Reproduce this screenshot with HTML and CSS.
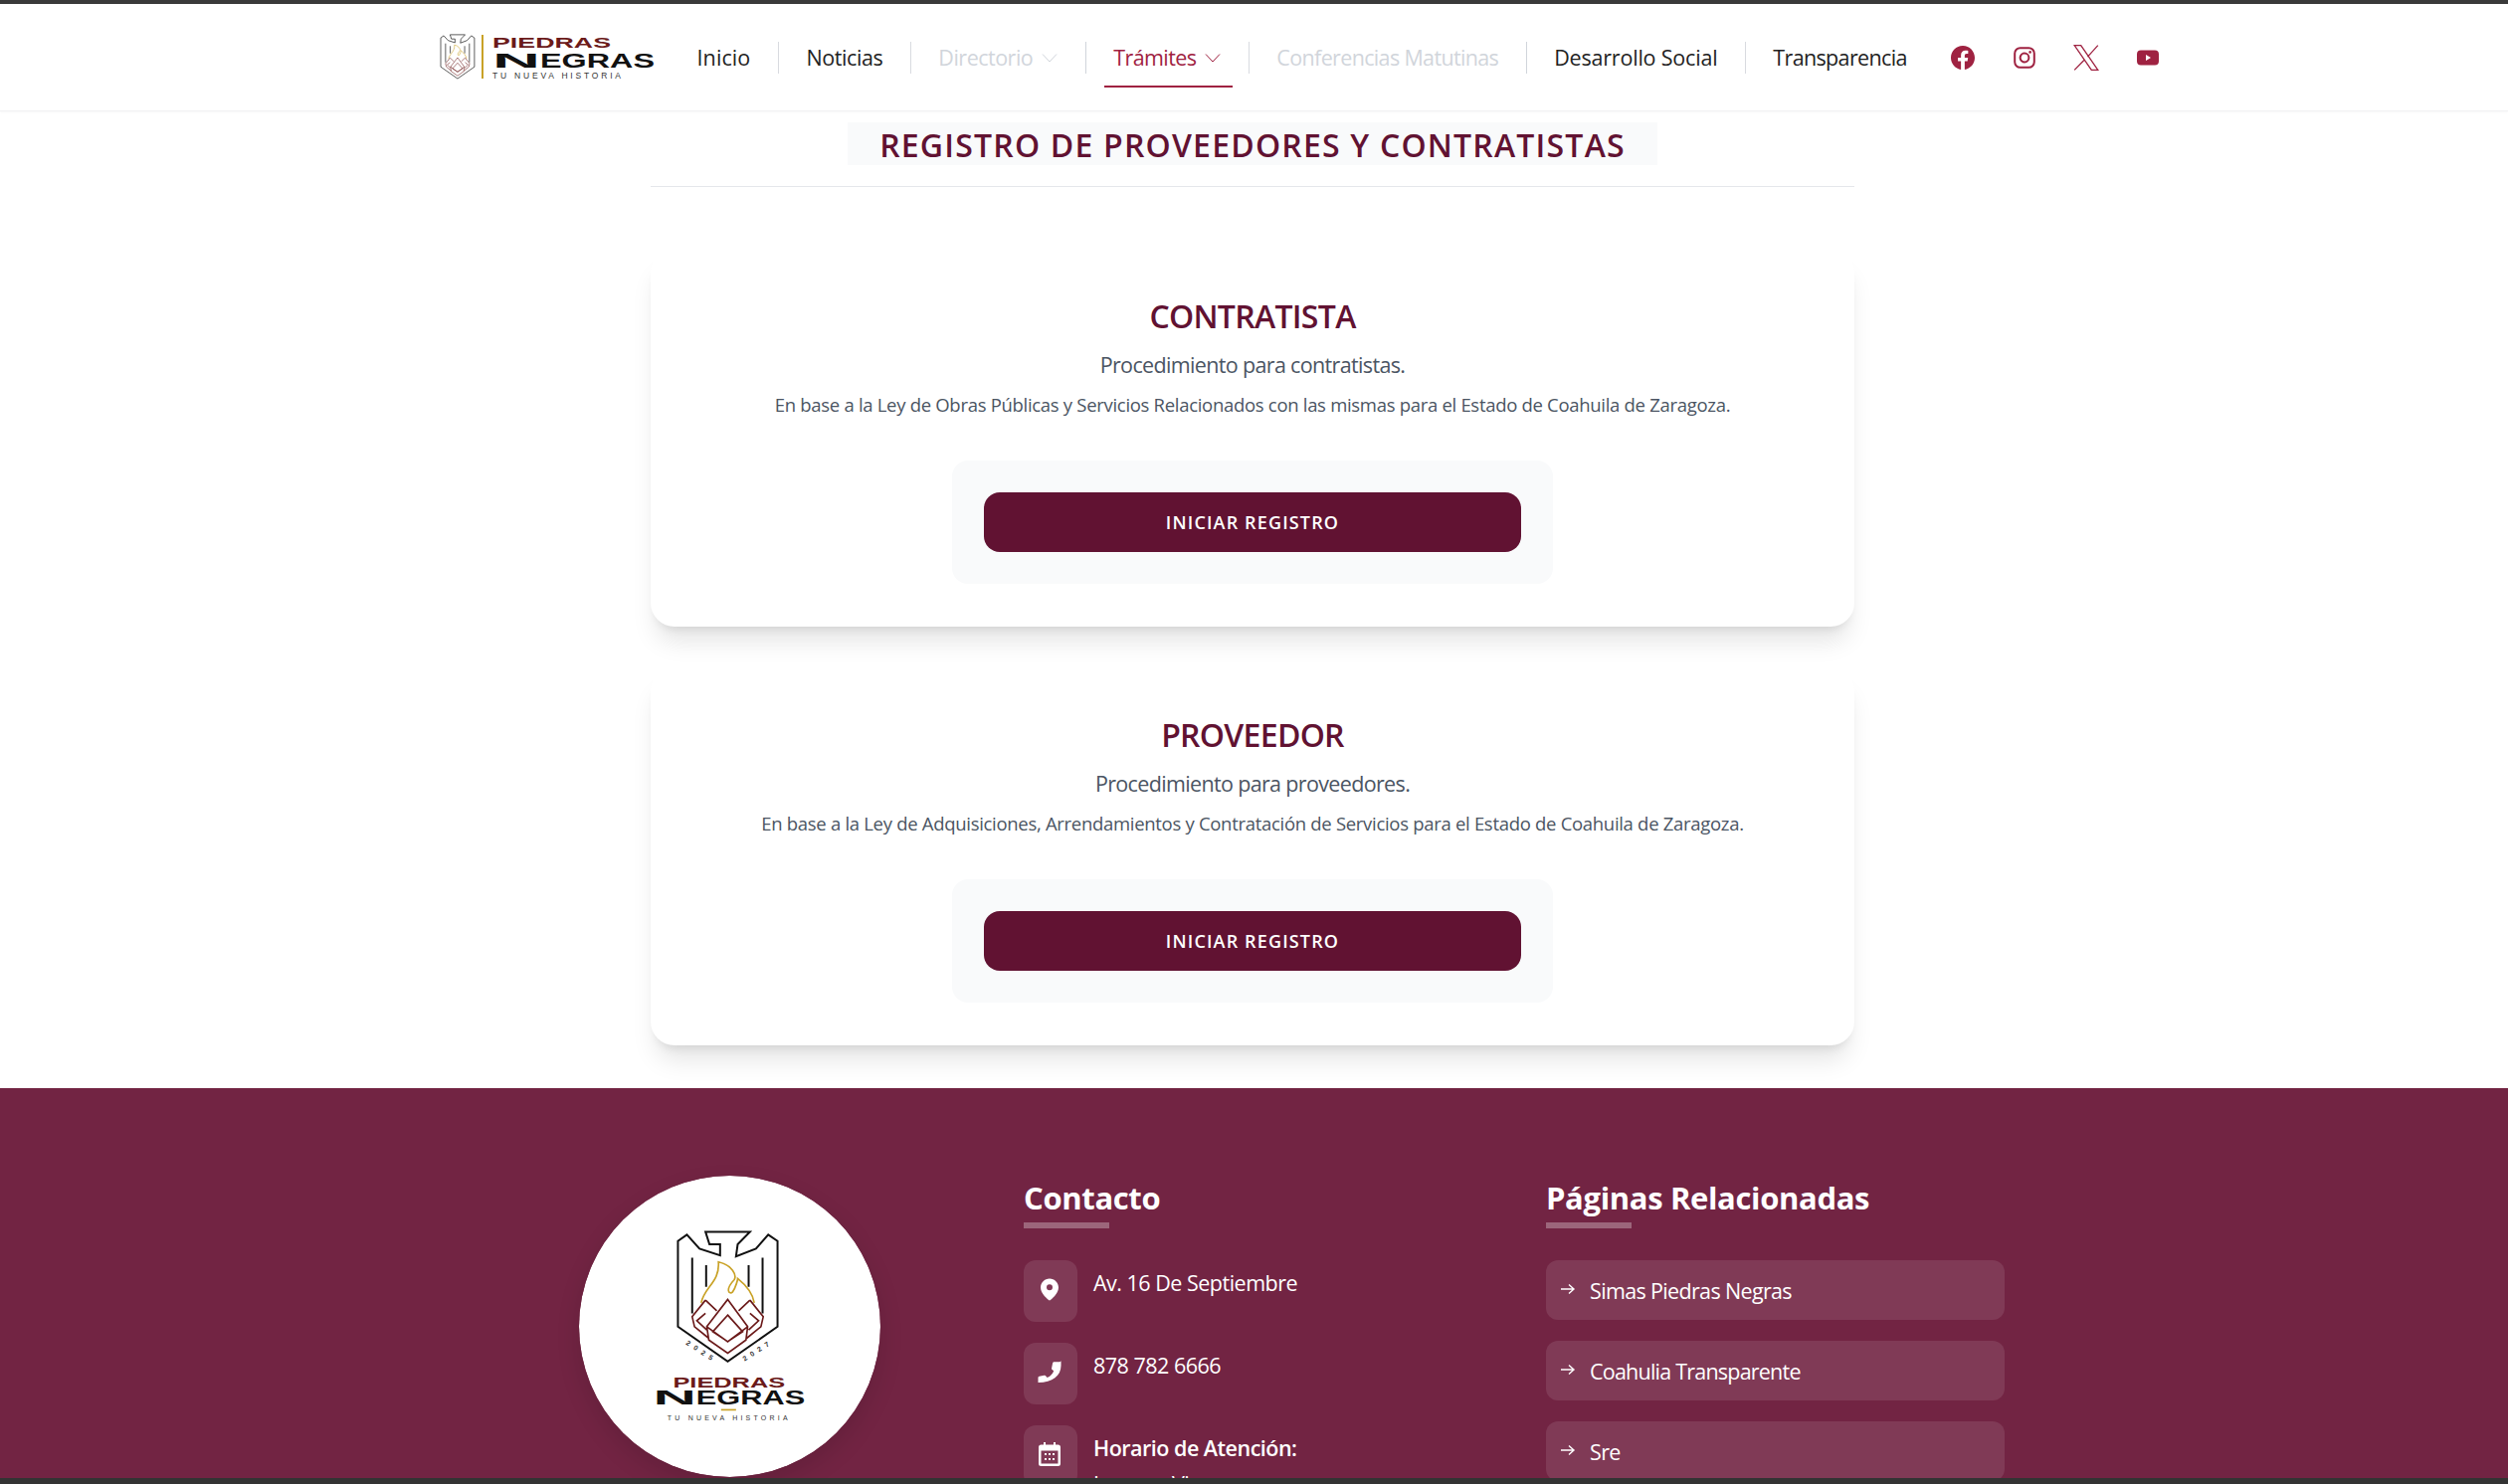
FILE: index.html
```html
<!DOCTYPE html>
<html lang="es">
<head>
<meta charset="utf-8">
<title>Registro de Proveedores y Contratistas</title>
<link rel="stylesheet" href="styles.css">
</head>
<body>
<svg class="defs" width="0" height="0" aria-hidden="true">
  <defs>
    <g id="emblem" fill="none">
      <path d="M448 234H582L545 272L540 308L600 285L637 243L665 262V520L515 625L365 520V262L392 243L430 285L492 305V272H460Z" stroke="#111" stroke-width="6"/>
      <path d="M408 312V480M450 335V400M578 335V400M620 312V480" stroke="#111" stroke-width="6"/>
      <path d="M435 448C445 400 492 385 487 325C530 335 542 365 535 378C505 410 520 425 530 415C540 400 545 378 545 375C570 395 590 420 595 448" stroke="#c9a227" stroke-width="5"/>
      <path d="M515 438L575 520L570 560L515 600L458 560L452 520ZM515 485L560 535L515 565L470 535ZM452 520L515 565L575 520M448 440L408 490L415 520L458 555M448 440L482 472M448 480L422 502L452 530M582 440L622 490L615 520L572 555M582 440L548 472M582 480L608 502L578 530" stroke="#6b1a1a" stroke-width="5"/>
    </g>
  </defs>
</svg>

<div class="topline"></div>

<header class="navbar">
  <a class="brand" href="#">
    <svg class="brand-logo" viewBox="0 0 220 44">
      <use href="#emblem" transform="translate(3 0) scale(.113) translate(-365 -235)"/>
      <rect x="44" y="0" width="2" height="44" fill="#c9a227"/>
      <text x="55" y="13" class="lg-piedras" textLength="119" lengthAdjust="spacingAndGlyphs">PIEDRAS</text>
      <text x="55" y="33" class="lg-negras" textLength="48" lengthAdjust="spacingAndGlyphs">N</text>
      <text x="103" y="33" class="lg-negras" textLength="115" lengthAdjust="spacingAndGlyphs">EGRAS</text>
      <text x="55" y="44" class="lg-sub" textLength="129">TU NUEVA HISTORIA</text>
    </svg>
  </a>
  <nav class="menu">
    <a class="menu-item is-loose" href="#">Inicio</a>
    <a class="menu-item" href="#">Noticias</a>
    <a class="menu-item is-muted" href="#">Directorio
      <svg class="chev" viewBox="0 0 16 16"><path d="M1 4.500l7 7.500 7-7.500"/></svg></a>
    <a class="menu-item is-active" href="#">Trámites
      <svg class="chev" viewBox="0 0 16 16"><path d="M1 4.500l7 7.500 7-7.500"/></svg></a>
    <a class="menu-item is-muted is-tight" href="#">Conferencias Matutinas</a>
    <a class="menu-item is-mid" href="#">Desarrollo Social</a>
    <a class="menu-item is-last is-tight" href="#">Transparencia</a>
  </nav>
  <div class="socials">
    <a class="social" href="#"><svg viewBox="0 0 16 16"><path d="M16 8.049c0-4.446-3.582-8.05-8-8.05C3.58 0-.002 3.603-.002 8.05c0 4.017 2.926 7.347 6.75 7.951v-5.625h-2.03V8.05H6.75V6.275c0-2.017 1.195-3.131 3.022-3.131.876 0 1.791.157 1.791.157v1.98h-1.009c-.993 0-1.303.621-1.303 1.258v1.51h2.218l-.354 2.326H9.25V16c3.824-.604 6.75-3.934 6.75-7.951"/></svg></a>
    <a class="social" href="#"><svg viewBox="0 0 24 24" class="ig"><rect x="2.200" y="2.200" width="19.600" height="19.600" rx="5.500"/><circle cx="12" cy="12" r="4.400"/><circle class="ig-dot" cx="17.600" cy="6.400" r="1.300"/></svg></a>
    <a class="social social-x" href="#"><svg viewBox="1 1 22 22"><path d="M2 1.500h5.500l14.500 21h-5.500zM22 1.500l-8.800 9.800M10.600 13.700 2 22.500"/></svg></a>
    <a class="social" href="#"><svg viewBox="0 0 24 24"><path d="M5 4.500h14a4 4 0 0 1 4 4v7a4 4 0 0 1-4 4H5a4 4 0 0 1-4-4v-7a4 4 0 0 1 4-4zm5 4.600v5.800l5-2.900z" fill-rule="evenodd"/></svg></a>
  </div>
</header>

<main class="content">
  <div class="title-row">
    <h1 class="page-title">REGISTRO DE PROVEEDORES Y CONTRATISTAS</h1>
  </div>

  <section class="card">
    <h2 class="card-title">CONTRATISTA</h2>
    <p class="card-lead">Procedimiento para contratistas.</p>
    <p class="card-note">En base a la Ley de Obras Públicas y Servicios Relacionados con las mismas para el Estado de Coahuila de Zaragoza.</p>
    <div class="cta-box"><a class="cta" href="#">INICIAR REGISTRO</a></div>
  </section>

  <section class="card">
    <h2 class="card-title">PROVEEDOR</h2>
    <p class="card-lead">Procedimiento para proveedores.</p>
    <p class="card-note">En base a la Ley de Adquisiciones, Arrendamientos y Contratación de Servicios para el Estado de Coahuila de Zaragoza.</p>
    <div class="cta-box"><a class="cta" href="#">INICIAR REGISTRO</a></div>
  </section>
</main>

<footer class="footer">
  <div class="footer-grid">
    <div class="footer-logo">
      <svg class="circle-logo" viewBox="67 65 908 908">
        <circle cx="521" cy="519" r="454" fill="#fff"/>
        <use href="#emblem"/>
        <text class="yr" transform="translate(388 572) rotate(33)" textLength="92">2025</text>
        <text class="yr" transform="translate(566 625) rotate(-33)" textLength="90">2027</text>
        <text x="350" y="702" class="cl-piedras" textLength="338" lengthAdjust="spacingAndGlyphs">PIEDRAS</text>
        <text x="290" y="755" class="cl-negras" textLength="130" lengthAdjust="spacingAndGlyphs">N</text>
        <text x="420" y="755" class="cl-negras" textLength="328" lengthAdjust="spacingAndGlyphs">EGRAS</text>
        <rect x="495" y="768" width="45" height="5" fill="#c9a227"/>
        <text x="333" y="803" class="cl-sub" textLength="362">TU NUEVA HISTORIA</text>
      </svg>
    </div>

    <div class="footer-col">
      <h3 class="footer-heading">Contacto</h3>
      <ul class="contact-list">
        <li class="contact-item">
          <span class="contact-icon"><svg viewBox="0 0 24 24"><path d="M12 1.500c-5 0-9 4-9 9 0 6 7.300 12 9 13 1.700-1 9-7 9-13 0-5-4-9-9-9zm0 11.800a3 3 0 1 1 0-6 3 3 0 0 1 0 6z" fill-rule="evenodd"/></svg></span>
          <span class="contact-text">Av. 16 De Septiembre</span>
        </li>
        <li class="contact-item">
          <span class="contact-icon"><svg viewBox="0 0 24 24"><path d="M23.500 1.500v4.500C23.500 16 15 23 .5 23v-4.800c0-.8.500-1.300 1.200-1.400l5-1c.7-.100 1.200.100 1.600.600l1.300 1.700c3.200-1.300 5.500-3.700 6.600-6.800l-1.600-1.300c-.5-.4-.7-1-.5-1.600l1-5c.2-.8.700-1.200 1.400-1.200h5.200c1.100 0 1.300-.4 1.300-.7z"/></svg></span>
          <span class="contact-text">878 782 6666</span>
        </li>
        <li class="contact-item">
          <span class="contact-icon"><svg viewBox="0 0 24 24"><path fill-rule="evenodd" d="M6 0h2v2.500h8V0h2v2.500h2.500A2.500 2.500 0 0 1 23 5v16.500a2.500 2.500 0 0 1-2.500 2.500h-17A2.500 2.500 0 0 1 1 21.500V5a2.500 2.500 0 0 1 2.500-2.500H6zM3.500 8.500v13h17v-13zM7 11h2v2H7zm4 0h2v2h-2zm4 0h2v2h-2zM7 16h2v2H7zm4 0h2v2h-2zm4 0h2v2h-2z"/></svg></span>
          <span class="contact-text"><strong class="contact-strong">Horario de Atención:</strong><br>Lunes a Viernes</span>
        </li>
      </ul>
    </div>

    <div class="footer-col">
      <h3 class="footer-heading">Páginas Relacionadas</h3>
      <ul class="link-list">
        <li><a class="link-item" href="#"><svg class="arrow" viewBox="0 0 16 16"><path d="M1 8h13M9 3.500 14 8l-5 4.500"/></svg>Simas Piedras Negras</a></li>
        <li><a class="link-item is-tight-link" href="#"><svg class="arrow" viewBox="0 0 16 16"><path d="M1 8h13M9 3.500 14 8l-5 4.500"/></svg>Coahulia Transparente</a></li>
        <li><a class="link-item" href="#"><svg class="arrow" viewBox="0 0 16 16"><path d="M1 8h13M9 3.500 14 8l-5 4.500"/></svg>Sre</a></li>
      </ul>
    </div>
  </div>
</footer>

<div class="bottomline"></div>
</body>
</html>
```
FILE: styles.css
```css
* { box-sizing: border-box; }
html, body { margin: 0; padding: 0; height: 1492px; overflow: hidden; }
body {
  font-family: "Open Sans", "Noto Sans", sans-serif;
  background: #fff;
  color: #1f2937;
  position: relative;
}
a { color: inherit; text-decoration: none; }
ul { list-style: none; margin: 0; padding: 0; }
.defs { position: absolute; }

.topline { height: 4px; background: #3a3a3a; }
.bottomline { position: absolute; left: 0; right: 0; bottom: 0; height: 6px; background: #333; }

.navbar {
  height: 108px;
  display: flex;
  align-items: center;
  padding-left: 440px;
  border-bottom: 1px solid #f1f1f3;
  box-shadow: 0 1px 2px rgba(0,0,0,.03);
}
.brand { display: block; width: 220px; height: 44px; margin-top: -2px; margin-right: 13px; }
.brand-logo { display: block; width: 220px; height: 44px; overflow: visible; }
.lg-piedras { font: 700 15.4px "Liberation Sans", sans-serif; fill: #6b1a1a; }
.lg-negras { font: 700 21px "Liberation Sans", sans-serif; fill: #111; }
.lg-sub { font: 400 8.5px "Liberation Sans", sans-serif; fill: #333; }

.menu { display: flex; align-items: center; }
.menu-item {
  position: relative;
  display: flex;
  align-items: center;
  gap: 9px;
  height: 32px;
  padding: 0 27.5px;
  font-size: 21.5px;
  letter-spacing: -.4px;
  color: #222;
  border-right: 1px solid #d9dbe0;
  white-space: nowrap;
}
.menu-item.is-last { border-right: 0; }
.menu-item.is-muted { color: #d1d5db; border-right-color: #d1d5db; letter-spacing: -.5px; }
.menu-item.is-active { color: #9f2241; letter-spacing: -.6px; }
.menu-item.is-loose { letter-spacing: .1px; }
.menu-item.is-mid { letter-spacing: -.2px; }
.menu-item.is-tight { letter-spacing: -.65px; }
.menu-item.is-active::after {
  content: "";
  position: absolute;
  left: 18px; right: 16px; bottom: -14px;
  height: 2px;
  background: #9f2241;
}
.chev { width: 16px; height: 16px; fill: none; stroke: currentColor; stroke-width: 1; }

.socials { display: flex; align-items: center; gap: 38px; margin-left: 17px; }
.social { display: block; width: 24px; height: 24px; }
.social svg { display: block; width: 24px; height: 24px; fill: #9f2241; }
.social .ig { fill: none; stroke: #9f2241; stroke-width: 2; }
.social .ig-dot { fill: #9f2241; stroke: none; }
.social-x svg { width: 26px; height: 26px; margin: -1px; fill: none; stroke: #9f2241; stroke-width: 1.1; }

.content { width: 1210px; margin-left: 654px; padding-bottom: 2px; }
.title-row {
  display: flex;
  justify-content: center;
  padding-top: 11px;
  padding-bottom: 21px;
  border-bottom: 1px solid #e5e7eb;
  margin-bottom: 62px;
}
.page-title {
  margin: 0;
  background: #f9fafb;
  padding: 0 32px;
  height: 43px;
  line-height: 45px;
  font-size: 32px;
  font-weight: 600;
  letter-spacing: 1.2px;
  color: #611232;
  white-space: nowrap;
}

.card {
  height: 380px;
  margin-bottom: 41px;
  padding-top: 48px;
  background: #fff;
  border-radius: 24px;
  box-shadow: 0 20px 25px -5px rgba(0,0,0,.1), 0 8px 10px -6px rgba(0,0,0,.1);
  display: flex;
  flex-direction: column;
  align-items: center;
}
.card-title {
  margin: 0;
  font-size: 32px;
  line-height: 40px;
  font-weight: 600;
  letter-spacing: -.7px;
  color: #611232;
}
.card-lead {
  margin: 14px 0 0;
  font-size: 21.5px;
  line-height: 30px;
  letter-spacing: -.65px;
  color: #4b5563;
}
.card-note {
  margin: 11px 0 0;
  font-size: 18.5px;
  line-height: 28px;
  letter-spacing: -.3px;
  color: #4b5563;
}
.cta-box {
  margin-top: 42px;
  width: 604px;
  height: 124px;
  padding: 32px;
  background: #f9fafb;
  border-radius: 16px;
}
.cta {
  display: flex;
  align-items: center;
  justify-content: center;
  height: 60px;
  width: 540px;
  background: #611232;
  border-radius: 16px;
  color: #fff;
  font-size: 18px;
  font-weight: 600;
  letter-spacing: 1.15px;
}

.footer {
  height: 398px;
  background: #722443;
  overflow: hidden;
  color: #fff;
}
.footer-grid {
  width: 1511px;
  margin-left: 504px;
  display: grid;
  grid-template-columns: repeat(3, 461px);
  column-gap: 64px;
  padding-top: 88px;
}
.footer-logo { display: flex; justify-content: center; padding-right: 2px; }
.circle-logo { display: block; width: 303px; height: 303px; border-radius: 50%; box-shadow: 0 10px 25px rgba(0,0,0,.12); }
.cl-piedras { font: 700 46px "Liberation Sans", sans-serif; fill: #6b1a1a; }
.cl-negras { font: 700 58px "Liberation Sans", sans-serif; fill: #111; }
.cl-sub { font: 400 21px "Liberation Sans", sans-serif; fill: #333; }
.yr { font: 700 21px "Liberation Sans", sans-serif; fill: #333; }

.footer-heading {
  position: relative;
  margin: 0 0 32px;
  height: 53px;
  font-size: 31px;
  line-height: 45px;
  font-weight: 700;
  letter-spacing: -.35px;
}
.footer-heading::after {
  content: "";
  position: absolute;
  left: 0; bottom: 0;
  width: 86px; height: 6px;
  background: rgba(255,255,255,.3);
}
.contact-item { display: flex; gap: 16px; margin-bottom: 21px; }
.contact-icon {
  flex: none;
  width: 54px; height: 62px;
  border-radius: 12px;
  background: rgba(255,255,255,.1);
  display: flex;
  align-items: center;
  justify-content: center;
}
.contact-icon svg { width: 24px; height: 26px; fill: #fff; margin-top: -4px; margin-left: -2px; }
.contact-text { font-size: 21.5px; line-height: 36px; letter-spacing: -.5px; padding-top: 5px; }
.contact-strong { font-weight: 600; }

.link-item {
  display: flex;
  align-items: center;
  height: 60px;
  margin-bottom: 21px;
  padding-left: 14px;
  border-radius: 12px;
  background: rgba(255,255,255,.1);
  font-size: 21.5px;
  letter-spacing: -.65px;
}
.link-item.is-tight-link { letter-spacing: -.78px; }
.arrow { width: 16px; height: 16px; margin-right: 14px; fill: none; stroke: #fff; stroke-width: 1.4; margin-top: -3px; }
```
